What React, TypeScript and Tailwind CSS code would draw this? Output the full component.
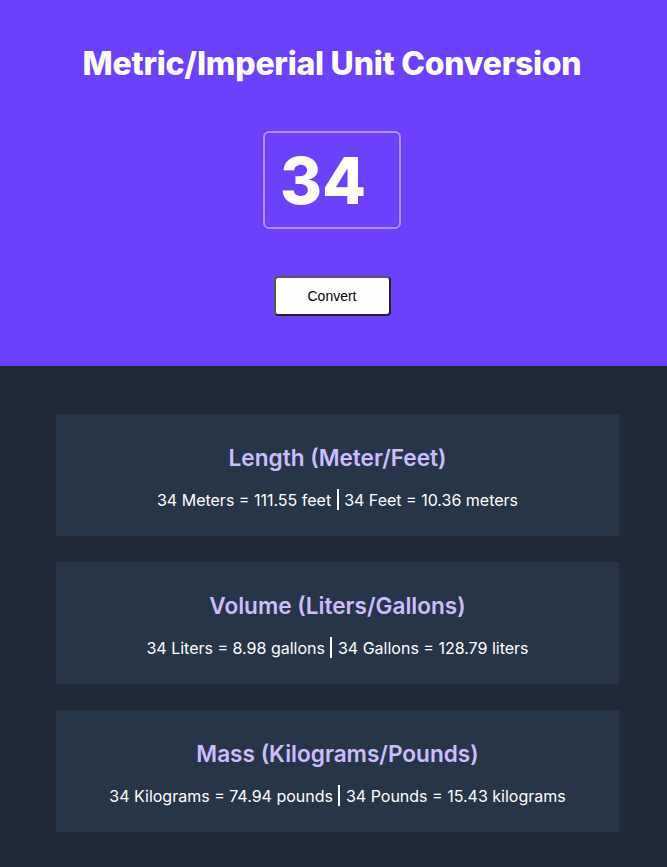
import { useState } from 'react';

const conversions = (n: number) => [
  {
    title: 'Length (Meter/Feet)',
    text: `${n} Meters = ${(n * 3.281).toFixed(2)} feet`,
    back: `${n} Feet = ${(n / 3.281).toFixed(2)} meters`,
  },
  {
    title: 'Volume (Liters/Gallons)',
    text: `${n} Liters = ${(n * 0.264).toFixed(2)} gallons`,
    back: `${n} Gallons = ${(n / 0.264).toFixed(2)} liters`,
  },
  {
    title: 'Mass (Kilograms/Pounds)',
    text: `${n} Kilograms = ${(n * 2.204).toFixed(2)} pounds`,
    back: `${n} Pounds = ${(n / 2.204).toFixed(2)} kilograms`,
  },
];

export default function App() {
  const [value, setValue] = useState('34');
  const [num, setNum] = useState(34);

  return (
    <div className="min-h-screen bg-[#1f2937] font-['Inter',sans-serif]">
      <div className="flex h-[366px] flex-col items-center bg-[#6c40ff] pt-[44px] pr-[3px]">
        <h1 className="text-[32px] font-extrabold leading-[40px] tracking-[-0.25px] text-white">
          Metric/Imperial Unit Conversion
        </h1>
        <input
          value={value}
          onChange={(e) => setValue(e.target.value)}
          className="mt-[47px] h-[98px] w-[138px] rounded-[6px] border-2 border-[rgba(255,255,255,0.45)] bg-transparent pl-[15px] text-[64px] font-extrabold text-white outline-none"
        />
        <button
          onClick={() => setNum(Number(value) || 0)}
          className="mt-[47px] h-[40px] w-[117px] rounded-[4px] border-2 border-[#222] border-t-[#555] border-l-[#555] bg-white font-['Liberation_Sans',Arial,sans-serif] text-[14px] text-black"
        >
          Convert
        </button>
      </div>

      <div className="flex flex-col gap-[26px] pt-[48px] pb-[36px] pl-[56px]">
        {conversions(num).map((c) => (
          <div
            key={c.title}
            className="flex h-[122px] w-[563px] flex-col items-center bg-[#273549] pt-[30px]"
          >
            <h2 className="text-[22.6px] font-semibold leading-[28px] text-[#ccbdfd]">{c.title}</h2>
            <p className="mt-[13px] text-[16px] leading-[22px] text-white">
              {c.text} <span className="mx-[1px] inline-block h-[21px] w-[2px] translate-y-[4px] bg-white" /> {c.back}
            </p>
          </div>
        ))}
      </div>
    </div>
  );
}
